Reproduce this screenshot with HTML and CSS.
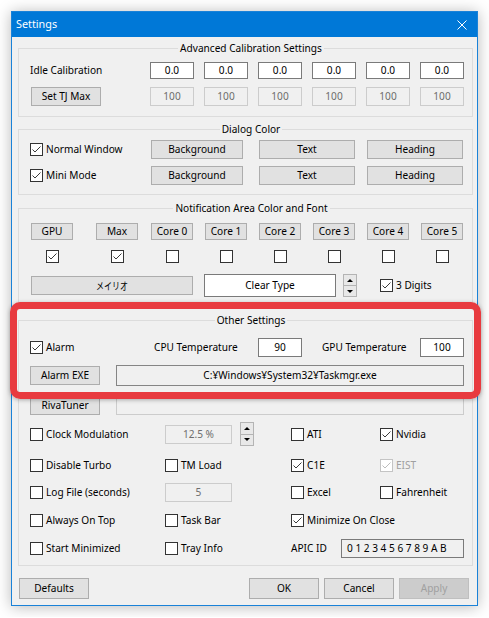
FILE: index.html
```html
<!DOCTYPE html>
<html lang="en">
<head>
<meta charset="utf-8">
<title>Settings</title>
<link rel="stylesheet" href="styles.css">
</head>
<body>
<div class="window">
  <div class="titlebar">
    <span class="title">Settings</span>
    <svg class="close" width="10" height="10" viewBox="0 0 10 10"><path d="M0.5 0.5L9.5 9.5M9.5 0.5L0.5 9.5"/></svg>
  </div>
  <div class="client">
    <fieldset class="group g1">
      <legend>Advanced Calibration Settings</legend>
      <div class="calib">
        <span class="lbl">Idle Calibration</span>
        <span class="edit">0.0</span>
        <span class="edit">0.0</span>
        <span class="edit">0.0</span>
        <span class="edit">0.0</span>
        <span class="edit">0.0</span>
        <span class="edit">0.0</span>
        <span class="btn tj">Set TJ Max</span>
        <span class="edit dis">100</span>
        <span class="edit dis">100</span>
        <span class="edit dis">100</span>
        <span class="edit dis">100</span>
        <span class="edit dis">100</span>
        <span class="edit dis">100</span>
      </div>
    </fieldset>

    <fieldset class="group g2">
      <legend>Dialog Color</legend>
      <div class="dc">
        <span class="chk"><i class="box"><svg viewBox="0 0 11 11"><path d="M1.5 5.5L4 8L9.5 2.5"/></svg></i>Normal Window</span>
        <span class="btn w92">Background</span>
        <span class="btn w96">Text</span>
        <span class="btn w96">Heading</span>
        <span class="chk"><i class="box"><svg viewBox="0 0 11 11"><path d="M1.5 5.5L4 8L9.5 2.5"/></svg></i>Mini Mode</span>
        <span class="btn w92">Background</span>
        <span class="btn w96">Text</span>
        <span class="btn w96">Heading</span>
      </div>
    </fieldset>

    <fieldset class="group g3">
      <legend>Notification Area Color and Font</legend>
      <div class="ngrid nbtns">
        <span class="btn">GPU</span>
        <span class="btn">Max</span>
        <span class="btn">Core 0</span>
        <span class="btn">Core 1</span>
        <span class="btn">Core 2</span>
        <span class="btn">Core 3</span>
        <span class="btn">Core 4</span>
        <span class="btn">Core 5</span>
      </div>
      <div class="ngrid nchks">
        <span class="cell"><i class="box"><svg viewBox="0 0 11 11"><path d="M1.5 5.5L4 8L9.5 2.5"/></svg></i></span>
        <span class="cell"><i class="box"><svg viewBox="0 0 11 11"><path d="M1.5 5.5L4 8L9.5 2.5"/></svg></i></span>
        <span class="cell"><i class="box"></i></span>
        <span class="cell"><i class="box"></i></span>
        <span class="cell"><i class="box"></i></span>
        <span class="cell"><i class="box"></i></span>
        <span class="cell"><i class="box"></i></span>
        <span class="cell"><i class="box"></i></span>
      </div>
      <div class="fontrow">
        <span class="btn fontbtn"><span class="jp">メイリオ</span></span>
        <span class="cleartype">Clear Type</span>
        <span class="spin tall23"><span class="sp up"></span><span class="sp dn"></span></span>
        <span class="chk digits"><i class="box"><svg viewBox="0 0 11 11"><path d="M1.5 5.5L4 8L9.5 2.5"/></svg></i>3 Digits</span>
      </div>
    </fieldset>

    <fieldset class="group g4">
      <legend>Other Settings</legend>
      <div class="orow1">
        <span class="chk w124"><i class="box"><svg viewBox="0 0 11 11"><path d="M1.5 5.5L4 8L9.5 2.5"/></svg></i>Alarm</span>
        <span class="cpu">CPU Temperature</span>
        <span class="edit temp">90</span>
        <span class="gpu">GPU Temperature</span>
        <span class="edit temp">100</span>
      </div>
      <div class="orow2">
        <span class="btn side">Alarm EXE</span>
        <span class="path">C:¥Windows¥System32¥Taskmgr.exe</span>
      </div>
      <div class="orow3">
        <span class="btn side">RivaTuner</span>
        <span class="path off"></span>
      </div>
      <div class="ogrid r4">
        <span class="chk"><i class="box"></i>Clock Modulation</span>
        <span class="edit dis small">12.5 %</span>
        <span class="spin tall24"><span class="sp up"></span><span class="sp dn"></span></span>
        <span class="chk"><i class="box"></i>ATI</span>
        <span class="chk"><i class="box"><svg viewBox="0 0 11 11"><path d="M1.5 5.5L4 8L9.5 2.5"/></svg></i>Nvidia</span>
      </div>
      <div class="ogrid r5">
        <span class="chk"><i class="box"></i>Disable Turbo</span>
        <span class="chk span2"><i class="box"></i>TM Load</span>
        <span class="chk"><i class="box"><svg viewBox="0 0 11 11"><path d="M1.5 5.5L4 8L9.5 2.5"/></svg></i>C1E</span>
        <span class="chk disabled"><i class="box"><svg viewBox="0 0 11 11"><path d="M1.5 5.5L4 8L9.5 2.5"/></svg></i>EIST</span>
      </div>
      <div class="ogrid r6">
        <span class="chk"><i class="box"></i>Log File (seconds)</span>
        <span class="edit dis small">5</span>
        <span></span>
        <span class="chk"><i class="box"></i>Excel</span>
        <span class="chk"><i class="box"></i>Fahrenheit</span>
      </div>
      <div class="ogrid r7">
        <span class="chk"><i class="box"></i>Always On Top</span>
        <span class="chk span2"><i class="box"></i>Task Bar</span>
        <span class="chk span2"><i class="box"><svg viewBox="0 0 11 11"><path d="M1.5 5.5L4 8L9.5 2.5"/></svg></i>Minimize On Close</span>
      </div>
      <div class="ogrid r8">
        <span class="chk"><i class="box"></i>Start Minimized</span>
        <span class="chk span2"><i class="box"></i>Tray Info</span>
        <span class="apic span2"><span class="apic-lbl">APIC ID</span><span class="apic-box">0 1 2 3 4 5 6 7 8 9 A B</span></span>
      </div>
    </fieldset>

    <div class="footer">
      <span class="btn">Defaults</span>
      <span class="spacer"></span>
      <span class="btn">OK</span>
      <span class="btn">Cancel</span>
      <span class="btn off">Apply</span>
    </div>
  </div>
  <div class="highlight"></div>
</div>
</body>
</html>
```

FILE: styles.css
```css
* { box-sizing: border-box; }
html, body { margin: 0; background: #fff; }
body {
  padding: 11px;
  font-family: "Noto Sans", "Noto Sans CJK JP", sans-serif;
  font-size: 10.1px;
  line-height: 1.2;
  color: #000;
}

.window {
  position: relative;
  width: 467px;
  border: 1px solid #1a82d8;
  background: #f0f0f0;
  box-shadow: 0 1px 14px rgba(0, 0, 0, 0.28);
}

.titlebar {
  height: 25px;
  background: #0078d7;
  color: #fff;
  display: flex;
  align-items: center;
  justify-content: space-between;
  padding: 0 10px 0 4px;
}
.title { font-size: 10.8px; }
.close { display: block; }
.close path { stroke: #fff; stroke-width: 1; fill: none; }

.client { padding: 4px 0 6px 0; }

.group {
  border: 1px solid #dcdcdc;
  margin: 0 4px 0 6px;
  padding: 0;
  min-width: 0;
}
.group legend {
  margin: 0 auto;
  padding: 0 2px;
  height: 14px;
  line-height: 14px;
}

/* generic controls */
.btn {
  display: flex;
  align-items: center;
  justify-content: center;
  background: #e1e1e1;
  border: 1px solid #adadad;
  white-space: nowrap;
}
.btn.off {
  background: #cccccc;
  border-color: #bfbfbf;
  color: #a0a0a0;
}
.edit {
  display: flex;
  align-items: center;
  justify-content: center;
  background: #fff;
  border: 1px solid #7a7a7a;
}
.edit.dis {
  background: #f0f0f0;
  border-color: #cccccc;
  color: #6d6d6d;
}
.chk {
  display: flex;
  align-items: center;
  gap: 3px;
  white-space: nowrap;
}
.box {
  display: block;
  flex: none;
  width: 13px;
  height: 13px;
  border: 1px solid #333;
  background: #fff;
}
.box svg {
  display: block;
  width: 11px;
  height: 11px;
}
.box svg path { fill: none; stroke: #3a3a3a; stroke-width: 1; }
.chk.disabled { color: #a0a0a0; }
.chk.disabled .box { border-color: #c4c4c4; }
.chk.disabled .box svg path { stroke: #bcbcbc; }

.spin {
  display: flex;
  flex-direction: column;
  width: 14px;
  flex: none;
}
.spin.tall23 { height: 23px; }
.spin.tall24 { height: 24px; }
.sp {
  flex: 1;
  display: flex;
  align-items: center;
  justify-content: center;
  background: #e8e8e8;
  border: 1px solid #b4b4b4;
}
.sp.up { border-bottom-width: 0; }
.sp.up::before {
  content: "";
  border-left: 3px solid transparent;
  border-right: 3px solid transparent;
  border-bottom: 3px solid #000;
}
.sp.dn::before {
  content: "";
  border-left: 3px solid transparent;
  border-right: 3px solid transparent;
  border-top: 3px solid #000;
}

/* group 1 */
.g1 { padding: 7px 0 10px 11px; }
.calib {
  display: grid;
  grid-template-columns: 110px repeat(6, 44px);
  grid-template-rows: 17px 19px;
  column-gap: 10px;
  row-gap: 8px;
  align-items: center;
}
.calib .edit { height: 100%; }
.lbl { white-space: nowrap; }
.tj { width: 70px; height: 19px; margin-left: 1px; }

/* group 2 */
.g2 { margin-top: 5px; padding: 4px 0 9px 11px; }
.dc {
  display: grid;
  grid-template-columns: 121px 108px 108px 96px;
  grid-template-rows: 19px 19px;
  row-gap: 7px;
  align-items: center;
}
.dc .btn { height: 19px; }
.w92 { width: 92px; }
.w96 { width: 96px; }

/* group 3 */
.g3 { margin-top: 6px; padding: 8px 0 9px 12px; }
.ngrid {
  display: grid;
  grid-template-columns: 65px 55px repeat(6, 54px);
}
.nbtns { height: 17px; }
.nbtns .btn { width: 42px; height: 17px; }
.nchks { margin-top: 10px; height: 13px; }
.nchks .cell { width: 42px; display: flex; justify-content: center; }
.fontrow {
  display: flex;
  align-items: center;
  height: 23px;
  margin-top: 11px;
}
.fontbtn { width: 162px; height: 19px; }
.jp {
  display: inline-block;
  font-family: "Noto Sans CJK JP", sans-serif;
  font-size: 10px;
  transform: scaleX(0.8);
}
.cleartype {
  margin-left: 11px;
  width: 132px;
  height: 23px;
  display: flex;
  align-items: center;
  justify-content: center;
  background: #fff;
  border: 1px solid #7a7a7a;
}
.tall23 { margin-left: 7px; }
.digits { margin-left: 23px; }

/* group 4 */
.g4 { margin-top: 6px; padding: 11px 0 7px 11px; }
.orow1 { display: flex; align-items: center; height: 19px; }
.w124 { width: 124px; }
.cpu { width: 104px; white-space: nowrap; }
.gpu { width: 98px; margin-left: 20px; white-space: nowrap; }
.temp { width: 44px; height: 19px; }
.orow2, .orow3 { display: flex; align-items: center; }
.orow2 { margin-top: 8px; height: 21px; }
.orow3 { margin-top: 9px; height: 20px; }
.side { width: 70px; height: 19px; }
.path {
  margin-left: 16px;
  width: 348px;
  height: 100%;
  display: flex;
  align-items: center;
  justify-content: center;
  background: #f0f0f0;
  border: 1px solid #858585;
}
.path.off { border-color: #cccccc; }

.ogrid {
  display: grid;
  grid-template-columns: 135px 75px 51px 89px 1fr;
  align-items: center;
  height: 20px;
}
.span2 { grid-column: span 2; }
.r4 { margin-top: 7px; height: 24px; }
.r5 { margin-top: 9px; }
.r6 { margin-top: 7px; }
.r7 { margin-top: 8px; }
.r8 { margin-top: 8px; }
.small { width: 67px; height: 19px; }
.apic { display: flex; align-items: center; }
.apic-lbl { width: 50px; white-space: nowrap; }
.apic-box {
  width: 123px;
  height: 19px;
  display: flex;
  align-items: center;
  padding-left: 5px;
  border: 1px solid #7a7a7a;
  white-space: nowrap;
}

/* footer */
.footer {
  display: flex;
  gap: 5px;
  height: 21px;
  margin-top: 12px;
  padding: 0 8px 0 7px;
}
.footer .btn { width: 70px; height: 21px; }
.spacer { flex: 1; }

/* annotation overlay */
.highlight {
  position: absolute;
  left: -2px;
  top: 290px;
  width: 471px;
  height: 97px;
  border: 7px solid #e83a3f;
  border-radius: 10px;
  box-shadow: 0 1px 4px rgba(0, 0, 0, 0.3);
  pointer-events: none;
}
```
